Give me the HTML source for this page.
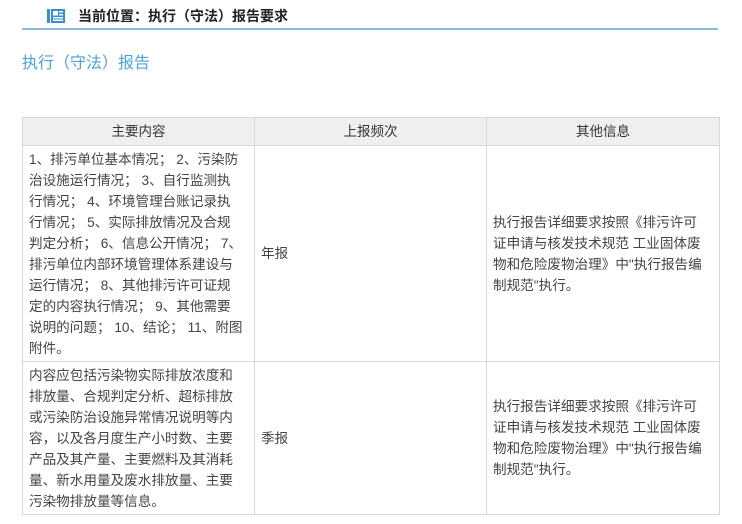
<!DOCTYPE html>
<html><head><meta charset="utf-8"><style>
body{margin:0;width:742px;height:524px;background:#fff;font-family:"Liberation Sans","Noto Sans CJK SC",sans-serif;position:relative;overflow:hidden;color:#333}
.bc{position:absolute;left:78px;top:6px;font-size:14px;font-weight:bold;color:#222;line-height:20px}
.line{position:absolute;left:22px;top:28px;width:696px;height:2px;background:#8bb8e0}
.ic{position:absolute;left:47px;top:9px;width:18px;height:14px}
.title{position:absolute;left:22px;top:53px;font-size:16px;color:#4aa3dc;line-height:22px}
table{position:absolute;left:22px;top:117px;width:697px;border-collapse:collapse;font-size:13.6px;line-height:21px;table-layout:fixed}
td,th{border:1px solid #d8d8d8;padding:0 6px;vertical-align:middle;white-space:nowrap;color:#444;overflow:hidden}
th{background:#efefef;font-weight:normal;height:27px;color:#333;font-size:13.5px}
</style></head><body>
<svg class="ic" viewBox="0 0 18 14"><rect x="0" y="0" width="3" height="14" fill="#3a8fd0"/><rect x="4" y="0" width="14" height="14" fill="#3a8fd0"/><rect x="6" y="2" width="5" height="4.5" fill="#fff"/><rect x="12" y="2" width="4" height="1.5" fill="#fff"/><rect x="12" y="5" width="4" height="1.5" fill="#fff"/><rect x="6" y="8" width="10" height="1.5" fill="#fff"/><rect x="6" y="10.5" width="10" height="1.5" fill="#fff"/></svg>
<div class="bc">当前位置：执行（守法）报告要求</div>
<div class="line"></div>
<div class="title">执行（守法）报告</div>
<table>
<colgroup><col style="width:232px"><col style="width:232px"><col style="width:233px"></colgroup>
<tr><th>主要内容</th><th>上报频次</th><th>其他信息</th></tr>
<tr style="height:216px"><td>1、排污单位基本情况； 2、污染防<br>治设施运行情况； 3、自行监测执<br>行情况； 4、环境管理台账记录执<br>行情况； 5、实际排放情况及合规<br>判定分析； 6、信息公开情况； 7、<br>排污单位内部环境管理体系建设与<br>运行情况； 8、其他排污许可证规<br>定的内容执行情况； 9、其他需要<br>说明的问题； 10、结论； 11、附图<br>附件。</td><td>年报</td><td>执行报告详细要求按照《排污许可<br>证申请与核发技术规范 工业固体废<br>物和危险废物治理》中"执行报告编<br>制规范"执行。</td></tr>
<tr style="height:153px"><td>内容应包括污染物实际排放浓度和<br>排放量、合规判定分析、超标排放<br>或污染防治设施异常情况说明等内<br>容，以及各月度生产小时数、主要<br>产品及其产量、主要燃料及其消耗<br>量、新水用量及废水排放量、主要<br>污染物排放量等信息。</td><td>季报</td><td>执行报告详细要求按照《排污许可<br>证申请与核发技术规范 工业固体废<br>物和危险废物治理》中"执行报告编<br>制规范"执行。</td></tr>
</table>
</body></html>
